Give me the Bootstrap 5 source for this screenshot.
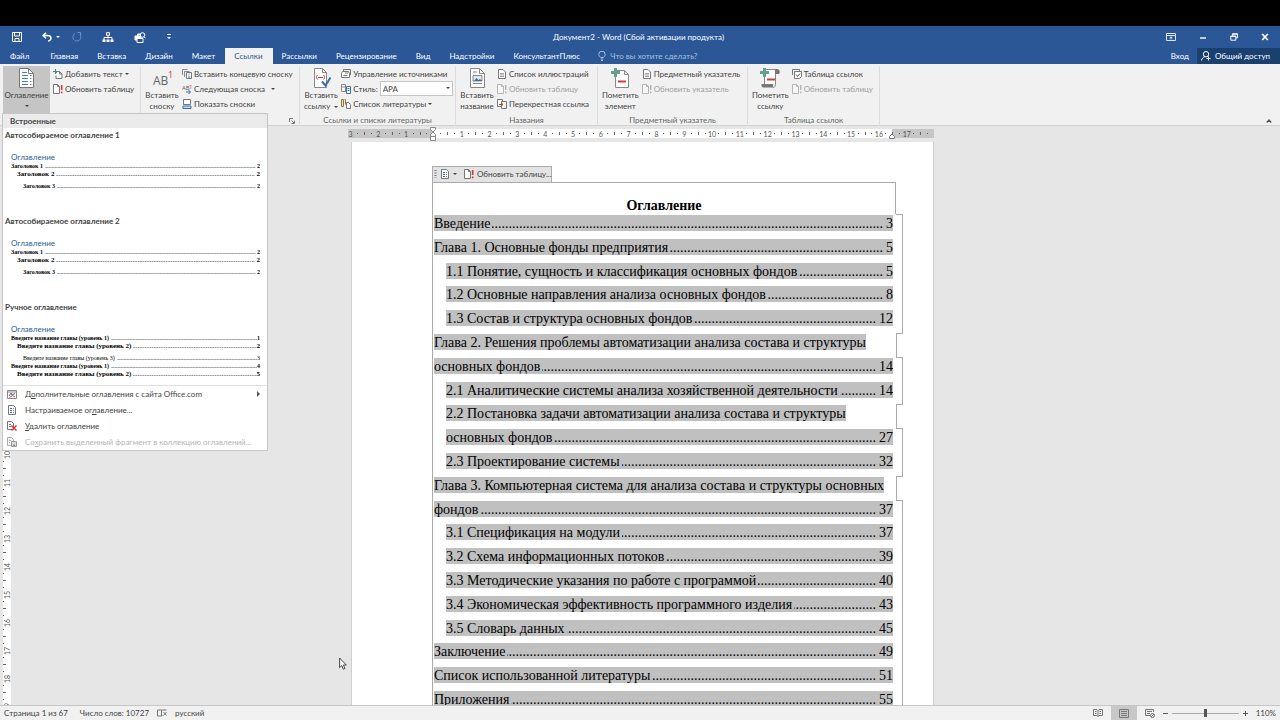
<!DOCTYPE html>
<html lang="ru">
<head>
<meta charset="utf-8">
<meta name="viewport" content="width=device-width, initial-scale=1">
<title>Документ2 - Word</title>
<link href="https://cdn.jsdelivr.net/npm/bootstrap@5.3.0/dist/css/bootstrap.min.css" rel="stylesheet">
<style>
  :root { --word-blue: #2b5797; --word-dark: #19406f; --chrome: #f1f1f1; --desk: #e6e6e6; --ink: #444; --mark: #c0c0c0; --frame: #ababab; --ui: Lato, Roboto, "Open Sans", sans-serif; }
  body { font-family: var(--ui); font-size: 8px; line-height: 12px; color: var(--ink); background: var(--desk); }
  button { font: inherit; color: inherit; background: none; border: 0; padding: 0; }
  svg { display: block; flex: none; fill: none; stroke-width: 1; }
  .letterbox { height: 26px; }
  .titlebar { background: var(--word-blue); height: 22px; }
  .tabstrip { background: var(--word-blue); height: 16px; padding-left: 1px; }
  .tabstrip .nav-link { color: #fff; padding: 0 10px 0 9px; line-height: 16px; border: 0; border-radius: 0; }
  .tabstrip .nav-link.active { background: var(--chrome); color: var(--word-blue); }
  .tellme { color: #a9bfdf; }
  .share { background: var(--word-dark); height: 16px; width: 83px; }
  .winbtns { gap: 23px; padding-right: 11px; }

  .ribbon { display: grid; grid-template-columns: 138px 159px 156px 142px 150px 132px 1fr; background: var(--chrome); border-bottom: 1px solid #d2d2d2; height: 62px; padding: 2px 0 0 3px; }
  .rgroup { border-right: 1px solid #dcdcdc; margin-bottom: 1px; }
  .rgroup-body { height: 48px; display: flex; align-items: flex-start; gap: 3px; }
  .rgroup-name { line-height: 12px; color: #666; }
  .bigbtn { line-height: 11px; display: flex; flex-direction: column; align-items: center; white-space: nowrap; min-width: 34px; }
  .bigbtn .pic { height: 24px; display: flex; align-items: center; }
  .bigbtn.pressed { background: #c5c5c5; width: 47px; height: 47px; }
  .rowbtn { height: 15px; display: flex; align-items: center; white-space: nowrap; gap: 2px; }
  .rowbtn:disabled { color: #a0a0a0; }
  .caret { width: 0; height: 0; border: 2px solid transparent; border-top-color: currentColor; border-bottom: 0; }
  .style-select { width: 73px; height: 15px; border: 1px solid #c6c6c6; border-radius: 0; background: #fff; color: var(--ink); font-size: 8px; padding: 0 2px; appearance: none; }
  .style-box { position: relative; }
  .style-box .caret { position: absolute; right: 3px; top: 6px; }

  .toc-menu { top: 100%; left: -1px; width: 266px; padding: 0; border: 1px solid #c6c6c6; border-radius: 0; font-size: 8px; color: var(--ink); background: #fff; }
  .toc-menu-head { background: #ebebeb; line-height: 14px; padding-left: 7px; font-weight: 700; }
  .gallery-item { display: flex; flex-direction: column; width: 100%; height: 86px; text-align: left; padding: 0 7px 0 8px; color: #000; font-family: "Liberation Serif", serif; line-height: 8px; }
  .gallery-title { font: 700 8px/14px var(--ui); color: var(--ink); margin: 0 0 10px -6px; }
  .gallery-head { font: 8px/10px var(--ui); color: #2a5f92; }
  .pv { display: flex; font-size: 6px; font-weight: 700; white-space: nowrap; }
  .pv-2 { font-size: 7px; padding-left: 6px; }
  .pv-3 { padding-left: 12px; margin-top: 4px; }
  .pv-plain { font-weight: 400; }
  .leader { flex: 1 1 0; min-width: 0; margin-left: 2px; overflow: hidden; display: flex; justify-content: flex-end; white-space: nowrap; }
  .leader::before { content: "........................................................................................................................................................................................................"; font-weight: 400; }
  .toc-cmds { border-top: 1px solid #e1e1e1; margin-top: -1px; }
  .toc-cmds .dropdown-item { height: 16px; padding: 0 7px 0 4px; gap: 8px; display: flex; align-items: center; color: inherit; line-height: 16px; }
  .toc-cmds .dropdown-item:disabled { color: #b4b4b4; }
  .arrow-r { border: 3px solid transparent; border-left-color: #555; border-right: 0; }

  .vruler { width: 8px; background: #fff; margin-left: 3px; margin-top: 17px; overflow: hidden; flex: none; }
  .vruler span { height: 7px; display: flex; align-items: center; justify-content: center; writing-mode: vertical-rl; transform: rotate(180deg); }
  .ticks { font-size: 7px; line-height: 8px; color: #555; }
  .hruler { width: 586px; height: 9px; margin: 3px 0 4px -3px; background: linear-gradient(to right, #c6c6c6 85px, #fff 85px, #fff 544px, #c6c6c6 544px); position: relative; padding-right: 3px; }
  .hruler .cells { display: flex; height: 9px; align-items: center; margin-left: -1px; }
  .hruler .cells span { flex: 1 1 0; width: 0; display: flex; justify-content: center; white-space: nowrap; }
  .dot::before { content: ""; width: 1px; height: 1px; background: #555; }
  .bar::before { content: ""; width: 1px; height: 3px; background: #666; }
  .vruler .bar::before { width: 3px; height: 1px; }
  .indent-l { position: absolute; left: 81px; top: -2px; }
  .indent-r { position: absolute; left: 540px; top: 4px; }

  .desk { padding-right: 6px; overflow: hidden; }
  .paper-col { width: 583px; }
  .paper { background: #fff; border: 1px solid #d0d0d0; border-width: 0 1px; padding: 24px 30px 0 80px; color: #000; font-family: "Liberation Serif", serif; font-size: 14px; }
  .cc-tab { font-family: var(--ui); font-size: 8px; height: 16px; width: 120px; background: #e3e3e3; border: 1px solid var(--frame); border-bottom: 0; color: var(--ink); padding-bottom: 2px; gap: 3px; }
  .cc-tab button { display: flex; align-items: center; gap: 3px; white-space: nowrap; }
  .cc { border-left: 1px solid var(--frame); }
  .cc-head { height: 32px; margin-right: 7px; border: 1px solid var(--frame); border-width: 1px 1px 0 0; font-size: 14px; line-height: 46px; margin-bottom: 0; font-weight: 700; text-align: center; }
  .toc-row { display: flex; height: 1.7em; line-height: 18px; padding-left: 1px; white-space: nowrap; color: #000; text-decoration: none; }
  .toc-row.sub { padding-left: 13px; }
  .toc-fill { background: var(--mark); height: 16px; margin-top: 1px; }
  .toc-fill.long { display: flex; flex: 1 1 0; min-width: 0; }
  .toc-row .notch { width: 10px; margin-left: auto; flex: none; display: flex; padding-left: 3px; }
  .notch::before { content: ""; flex: 1; border-right: 1px solid var(--frame); }
  .wrap-row .notch::before { border: 1px solid var(--frame); border-right: 0; margin-bottom: -1px; }
  .first-row .notch::before { border-top: 1px solid var(--frame); }
  .pg { padding-left: 3px; }

  .statusbar { background: var(--chrome); border-top: 1px solid #c6c6c6; height: 15px; }
  .view-on { background: #c8c8c8; width: 26px; height: 14px; display: flex; align-items: center; justify-content: center; }
  .zoomer { appearance: none; width: 67px; height: 8px; margin: 0; background: linear-gradient(#aaa, #aaa) center / 100% 1px no-repeat; }
  .zoomer::-webkit-slider-thumb { appearance: none; width: 3px; height: 8px; background: #555; }
  .pointer { position: absolute; left: 339px; top: 657px; z-index: 1100; }
</style>
</head>
<body class="vh-100 d-flex flex-column overflow-hidden position-relative">

<svg width="0" height="0" class="position-absolute" aria-hidden="true">
  <symbol id="i-update" viewBox="0 0 10 10"><path d="M.5.5h4l2 2v7h-6z" fill="#fff" stroke="#777"/><path d="M4.5.5v2h2" stroke="#777"/><path d="M8.7 1v5M8.7 7.5v1.8" stroke="#d33a35" stroke-width="1.6"/></symbol>
  <symbol id="i-update-off" viewBox="0 0 10 10"><path d="M.5.5h4l2 2v7h-6z" fill="#f6f6f6" stroke="#b5b5b5"/><path d="M4.5.5v2h2" stroke="#b5b5b5"/><path d="M8.7 1v5M8.7 7.5v1.8" stroke="#b5b5b5" stroke-width="1.4"/></symbol>
  <symbol id="i-page" viewBox="0 0 10 10"><path d="M1.500.5h4.500l2.500 2.500v6.500h-7z" fill="#fff" stroke="#777"/><path d="M3 4.500h4M3 6h4M3 7.500h4" stroke="#888" stroke-width=".8"/></symbol>
  <symbol id="i-toc" viewBox="0 0 10 10"><path d="M1.500.5h5l2 2v7h-7z" fill="#fff" stroke="#777"/><path d="M3 3.500h2M3 5.500h2M3 7.500h2" stroke="#3b6ea5"/><path d="M6 3.500h1M6 5.500h1M6 7.500h1" stroke="#777"/></symbol>
</svg>

<div class="letterbox bg-black flex-shrink-0"></div>

<header class="flex-shrink-0">
  <div class="titlebar d-flex align-items-center text-white">
    <div class="col d-flex align-items-center ps-2">
      <button aria-label="Сохранить" class="ms-1"><svg width="10" height="10" viewBox="0 0 10 10" stroke="#fff"><path d="M.5.5h9v9h-9zM2.500.5v3.500h5v-3.500M3 9.500v-3h4v3"/></svg></button>
      <button aria-label="Отменить" class="ms-3 ps-1"><svg width="10" height="10" viewBox="0 0 10 10" stroke="#fff"><path d="M4 .8L1 3.500l3 2.700M1 3.500h4.500c4.500 0 4.500 5 .5 5.500" stroke-width="1.500"/></svg></button>
      <span class="caret ms-1"></span>
      <button aria-label="Повторить" class="ms-2 ps-1" disabled><svg width="10" height="10" viewBox="0 0 10 10" stroke="#6f8fc0"><path d="M8 2.500A4 4 0 1 1 3 1.500M5.500.5H8.500V3.500"/></svg></button>
      <button aria-label="Структура" class="ms-3 ps-1"><svg width="12" height="11" viewBox="0 0 12 11" stroke="#fff"><path d="M4.500.7h3v2.600h-3zM6 3.500v3M2 8V5.500h8V8"/><path d="M.5 7.500h3v2.500h-3zM4.500 7.500h3v2.500h-3zM8.500 7.500h3v2.500h-3z" fill="#fff" stroke="none"/></svg></button>
      <button aria-label="Печать" class="ms-3 ps-1"><svg width="12" height="11" viewBox="0 0 12 11" stroke="#fff"><path d="M3.500 4V2h4M1 4h6v4H1z" fill="#fff"/><path d="M3 6.500h6v4H3z" fill="#2b5797"/><circle cx="8.500" cy="3" r="2.300" fill="#2b5797"/><path d="M10 4.800l1.500 1.500"/></svg></button>
      <button aria-label="Настроить панель" class="ms-3 ps-1"><svg width="6" height="6" viewBox="0 0 6 6"><path d="M1 .5h4" stroke="#fff"/><path d="M1 3h4L3 5z" fill="#fff"/></svg></button>
    </div>
    <div>Документ2 - Word (Сбой активации продукта)</div>
    <div class="col d-flex align-items-center justify-content-end winbtns">
      <button aria-label="Параметры ленты"><svg width="10" height="8" viewBox="0 0 10 8" stroke="#dbe5f3"><path d="M.5.5h9v7h-9zM.5 2.500h9M5 6.500V4M3.500 5L5 3.800 6.500 5"/></svg></button>
      <button aria-label="Свернуть"><svg width="8" height="8" viewBox="0 0 8 8"><path d="M1 5h6" stroke="#fff" stroke-width="1.400"/></svg></button>
      <button aria-label="Восстановить"><svg width="8" height="8" viewBox="0 0 8 8" stroke="#fff"><path d="M2.500 2.500V.8h5v4H6M.8 3h5v4.200h-5zM.8 3.500h5M2.500 1.200h5"/></svg></button>
      <button aria-label="Закрыть"><svg width="8" height="8" viewBox="0 0 8 8" stroke="#fff"><path d="M1.200 1l5.600 6M6.800 1L1.200 7" stroke-width="1.700"/></svg></button>
    </div>
  </div>
  <nav class="tabstrip d-flex">
    <ul class="nav flex-nowrap text-nowrap">
      <li class="nav-item me-1"><a class="nav-link pe-2" href="#">Файл</a></li>
      <li class="nav-item"><a class="nav-link" href="#">Главная</a></li>
      <li class="nav-item"><a class="nav-link" href="#">Вставка</a></li>
      <li class="nav-item"><a class="nav-link" href="#">Дизайн</a></li>
      <li class="nav-item"><a class="nav-link" href="#">Макет</a></li>
      <li class="nav-item"><a class="nav-link active" href="#">Ссылки</a></li>
      <li class="nav-item"><a class="nav-link" href="#">Рассылки</a></li>
      <li class="nav-item"><a class="nav-link" href="#">Рецензирование</a></li>
      <li class="nav-item"><a class="nav-link" href="#">Вид</a></li>
      <li class="nav-item"><a class="nav-link" href="#">Надстройки</a></li>
      <li class="nav-item"><a class="nav-link" href="#">КонсультантПлюс</a></li>
    </ul>
    <button class="tellme d-flex align-items-center ps-2 gap-1"><svg width="8" height="10" viewBox="0 0 8 10" stroke="#a9bfdf"><path d="M2.700 6.500C1 5 .8 3.800.8 3.400a3.200 3.200 0 0 1 6.400 0c0 .4-.2 1.600-1.900 3.100zM2.700 8h2.600M3 9.500h2"/></svg>Что вы хотите сделать?</button>
    <div class="ms-auto d-flex text-white align-items-center">
      <button class="me-2">Вход</button>
      <button class="share d-flex align-items-center gap-1 ps-1"><svg width="10" height="10" viewBox="0 0 10 10" stroke="#fff"><circle cx="5" cy="3.200" r="2.700"/><path d="M.6 9.500c.2-2 1.400-3.300 3-3.700M7.500 5.500v4M5.500 7.500h4"/></svg>Общий доступ</button>
    </div>
  </nav>

  <div class="ribbon">
    <section class="rgroup">
      <div class="rgroup-body">
        <div class="dropdown">
          <button class="bigbtn pressed" aria-expanded="true"><span class="pic"><svg width="15" height="20" viewBox="0 0 15 20"><path d="M.5.5h9l5 5v14H.5z" fill="#fff" stroke="#777"/><path d="M9.500.5v5h5" stroke="#777"/><path d="M3 4.500h5M3 7.500h6M3 10.500h6M3 13.500h6M3 16.500h6" stroke="#4a7ebb"/><path d="M11 7.500h1.500M11 10.500h1.500M11 13.500h1.500M11 16.500h1.500" stroke="#777"/></svg></span>Оглавление<span class="caret mt-1"></span></button>
          <div class="dropdown-menu toc-menu show">
            <div class="toc-menu-head">Встроенные</div>
            <button class="gallery-item"><span class="gallery-title">Автособираемое оглавление 1</span><span class="gallery-head">Оглавление</span>
              <span class="pv">Заголовок 1<span class="leader"></span>&nbsp;2</span><span class="pv pv-2">Заголовок 2<span class="leader"></span>&nbsp;2</span><span class="pv pv-3">Заголовок 3<span class="leader"></span>&nbsp;2</span></button>
            <button class="gallery-item"><span class="gallery-title">Автособираемое оглавление 2</span><span class="gallery-head">Оглавление</span>
              <span class="pv">Заголовок 1<span class="leader"></span>&nbsp;2</span><span class="pv pv-2">Заголовок 2<span class="leader"></span>&nbsp;2</span><span class="pv pv-3">Заголовок 3<span class="leader"></span>&nbsp;2</span></button>
            <button class="gallery-item"><span class="gallery-title">Ручное оглавление</span><span class="gallery-head">Оглавление</span>
              <span class="pv">Введите название главы (уровень 1)<span class="leader"></span>1</span><span class="pv pv-2">Введите название главы (уровень 2)<span class="leader"></span>2</span><span class="pv pv-3 pv-plain">Введите название главы (уровень 3)<span class="leader"></span>3</span><span class="pv">Введите название главы (уровень 1)<span class="leader"></span>4</span><span class="pv pv-2">Введите название главы (уровень 2)<span class="leader"></span>5</span></button>
            <div class="toc-cmds">
              <button class="dropdown-item"><svg width="10" height="10" viewBox="0 0 10 10"><path d="M.5 1.500h9v8h-9z" fill="#fff" stroke="#888"/><path d="M.5 3h9" stroke="#888"/><path d="M2 7l2-3 1 2 3-1.500" stroke="#3b6ea5"/><path d="M2.500 8.500l3-2 2.500 1.500" stroke="#d33a35"/></svg><span>Д<u>о</u>полнительные оглавления с сайта Office.com</span><span class="arrow-r ms-auto"></span></button>
              <button class="dropdown-item"><svg width="10" height="10"><use href="#i-toc"/></svg><span>Настраиваемое ог<u>л</u>авление...</span></button>
              <button class="dropdown-item"><svg width="10" height="10" viewBox="0 0 10 10"><path d="M.5.5h4l2 2v6h-6z" fill="#fff" stroke="#777"/><path d="M2 3.500h2M2 5.500h2" stroke="#777"/><path d="M4.500 4.500l5 5M9.500 4.500l-5 5" stroke="#d33a35" stroke-width="1.500"/></svg><span><u>У</u>далить оглавление</span></button>
              <button class="dropdown-item" disabled><svg width="10" height="10" viewBox="0 0 10 10"><path d="M.5.5h4l2 2v6h-6z" fill="#f6f6f6" stroke="#aaa"/><path d="M2 3.500h2M2 5.500h1" stroke="#aaa"/><path d="M4.500 4.500h5v5h-5z" fill="#ddd" stroke="#999"/><path d="M6 7.500h2v2H6z" fill="#888"/></svg><span>Со<u>х</u>ранить выделенный фрагмент в коллекцию оглавлений...</span></button>
            </div>
          </div>
        </div>
        <div>
          <button class="rowbtn"><svg width="10" height="10" viewBox="0 0 10 10"><path d="M3.500 4V2.500h3l2.500 2.500v4.500h-6v-3M6.500 2.500V5H9" fill="#fff" stroke="#777"/><path d="M2.500 0v5M0 2.500h5" stroke="#4a9078"/></svg>Добавить текст<span class="caret"></span></button>
          <button class="rowbtn"><svg width="10" height="10"><use href="#i-update"/></svg>Обновить таблицу</button>
        </div>
      </div>
    </section>

    <section class="rgroup">
      <div class="rgroup-body ps-1">
        <button class="bigbtn"><span class="pic"><svg width="22" height="20" viewBox="0 0 22 20" font-family="Open Sans, sans-serif"><text x="2" y="17" font-size="12" fill="#666">AB</text><text x="17" y="10" font-size="9" fill="#d33a35">1</text></svg></span>Вставить<span>сноску</span></button>
        <div>
          <button class="rowbtn"><svg width="10" height="10" viewBox="0 0 10 10"><path d="M.5 6V.5h5M2.500 8V2.500h5" stroke="#888"/><path d="M4.500 3.500h5v6h-5z" fill="#fff" stroke="#777"/><path d="M7 4.500v1M7 6.500V9" stroke="#3b6ea5"/></svg>Вставить концевую сноску</button>
          <button class="rowbtn"><svg width="10" height="10" viewBox="0 0 10 10" font-family="Open Sans, sans-serif"><text x="0" y="6" font-size="6" fill="#555">AB</text><text x="7" y="5" font-size="6" fill="#d33a35">1</text><path d="M4 8h4M6.500 6l2 2-2 2" stroke="#3b6ea5"/></svg>Следующая сноска<span class="caret ms-1"></span></button>
          <button class="rowbtn"><svg width="10" height="10" viewBox="0 0 10 10"><path d="M1.500.5h7v5h-7z" fill="#fff" stroke="#777"/><path d="M1 7h8v2.500H1z" fill="#c9dcf0" stroke="#3b6ea5"/></svg>Показать сноски</button>
        </div>
      </div>
      <div class="d-flex justify-content-end"><button aria-label="Параметры сносок" class="mt-1 me-1"><svg width="6" height="6" viewBox="0 0 6 6" stroke="#777"><path d="M.5 4V.5H4M2.500 2.500l2.500 2.500M5.500 2.500v3h-3"/></svg></button></div>
    </section>

    <section class="rgroup">
      <div class="rgroup-body ps-1">
        <button class="bigbtn"><span class="pic"><svg width="19" height="20" viewBox="0 0 19 20"><path d="M2.500.5h8l4 4v15h-12z" fill="#fff" stroke="#888"/><path d="M10.500.5v4h4" stroke="#888"/><path d="M5.500 7C4 9 4 9.500 5.500 11.500M6 9.500h5M11.500 7c1.500 2 1.500 2.500 0 4.500" stroke="#d33a35"/><path d="M10 13.500l3.500 4 5-8" stroke="#3b6ea5" stroke-width="2"/></svg></span>Вставить<span class="d-flex align-items-center gap-1">ссылку<span class="caret"></span></span></button>
        <div>
          <button class="rowbtn"><svg width="10" height="10" viewBox="0 0 10 10"><path d="M2.500 3V.5h7V6" stroke="#777"/><path d="M.5 4.500l1-2h6l1 2v4h-8z" fill="#fff" stroke="#777"/><path d="M2.500 6.500h4M4 4h3" stroke="#777"/></svg>Управление источниками</button>
          <div class="rowbtn"><svg width="10" height="10" viewBox="0 0 10 10"><path d="M.5.5h4v7h-4zM.5 3h4" fill="#fff" stroke="#888"/><path d="M5.500 2.500h4v7h-4z" fill="#fff" stroke="#3b6ea5"/><path d="M6.500 4.500h2M6.500 6.500h2" stroke="#3b6ea5"/></svg><label for="bibStyle">Стиль:</label><span class="style-box"><select id="bibStyle" class="style-select d-block"><option>APA</option></select><span class="caret"></span></span></div>
          <button class="rowbtn"><svg width="10" height="10" viewBox="0 0 10 10"><path d="M.5.5h2v7h-2zM3.500.5h1v5" fill="#f2dfa8" stroke="#8a7a40"/><path d="M5.500 3.500h2l2 2v4h-4z" fill="#fff" stroke="#777"/></svg>Список литературы<span class="caret"></span></button>
        </div>
      </div>
      <div class="rgroup-name text-center">Ссылки и списки литературы</div>
    </section>

    <section class="rgroup">
      <div class="rgroup-body ps-1">
        <button class="bigbtn"><span class="pic"><svg width="15" height="20" viewBox="0 0 15 20"><path d="M.5.5h9l5 5v14H.5z" fill="#fff" stroke="#888"/><path d="M9.500.5v5h5" stroke="#888"/><path d="M3 4h4M3 15.500h9" stroke="#888"/><path d="M3 7.500h9v5.500H3z" fill="#dceaf6" stroke="#888"/><path d="M4 13l2.500-3 2 2 1.500-1 2 2z" fill="#3b6ea5"/></svg></span>Вставить<span>название</span></button>
        <div>
          <button class="rowbtn"><svg width="10" height="10"><use href="#i-page"/></svg>Список иллюстраций</button>
          <button class="rowbtn" disabled><svg width="10" height="10"><use href="#i-update-off"/></svg>Обновить таблицу</button>
          <button class="rowbtn"><svg width="10" height="10" viewBox="0 0 10 10"><path d="M.5.5h5v7h-5z" fill="#fff" stroke="#777"/><path d="M4.500 2.500h5v7h-5z" fill="#fff" stroke="#777"/><path d="M2 5.500h4M5 4v3" stroke="#d33a35"/></svg>Перекрестная ссылка</button>
        </div>
      </div>
      <div class="rgroup-name text-center">Названия</div>
    </section>

    <section class="rgroup">
      <div class="rgroup-body ps-1">
        <button class="bigbtn"><span class="pic"><svg width="19" height="21" viewBox="0 0 19 21"><path d="M4.500 2.500h9l4 4v13h-13z" fill="#fff" stroke="#888"/><path d="M13.500 2.500v4h4" stroke="#888"/><path d="M4.500 0v9M0 4.500h9" stroke="#5fa189" stroke-width="3"/><path d="M7 13.500h8" stroke="#c8403a" stroke-width="2"/></svg></span>Пометить<span>элемент</span></button>
        <div>
          <button class="rowbtn"><svg width="10" height="10"><use href="#i-page"/></svg>Предметный указатель</button>
          <button class="rowbtn" disabled><svg width="10" height="10"><use href="#i-update-off"/></svg>Обновить указатель</button>
        </div>
      </div>
      <div class="rgroup-name text-center">Предметный указатель</div>
    </section>

    <section class="rgroup">
      <div class="rgroup-body ps-1">
        <button class="bigbtn"><span class="pic"><svg width="20" height="21" viewBox="0 0 20 21"><path d="M4.500 16V1.500h11V16" fill="#fff" stroke="#888"/><path d="M15.500 1.500h2c1.500 0 2 1.500 1.500 4h-3.500z" fill="#777" stroke="#777"/><path d="M1.500 16h11.500v3.500H3C1.500 19.500 1.500 17 1.500 16z" fill="#777"/><path d="M13 19.500c2 0 2.500-1.500 2.500-4" stroke="#888"/><path d="M4.500 0v9M0 4.500h9" stroke="#5fa189" stroke-width="3"/><path d="M7 11.500h8" stroke="#c8403a" stroke-width="2"/></svg></span>Пометить<span>ссылку</span></button>
        <div>
          <button class="rowbtn"><svg width="10" height="10" viewBox="0 0 10 10"><path d="M.5 6V.5h7v1.500" stroke="#777"/><path d="M2.500 2.500h7v5l-2 2h-5z" fill="#fff" stroke="#777"/><path d="M4 5.500l1.500 2 2.500-3" stroke="#555"/></svg>Таблица ссылок</button>
          <button class="rowbtn" disabled><svg width="10" height="10"><use href="#i-update-off"/></svg>Обновить таблицу</button>
        </div>
      </div>
      <div class="rgroup-name text-center">Таблица ссылок</div>
    </section>

    <div class="d-flex align-items-end justify-content-end pb-1 pe-1"><button aria-label="Свернуть ленту" class="me-1"><svg width="6" height="4" viewBox="0 0 6 4" stroke="#555"><path d="M.7 3.500L3 1l2.300 2.500" stroke-width="1.300"/></svg></button></div>
  </div>
</header>

<main class="d-flex flex-fill overflow-hidden">
  <div class="vruler ticks" id="vruler"></div>
  <div class="desk flex-fill d-flex justify-content-center">
    <div class="paper-col">
      <div class="hruler ticks">
        <div class="cells" id="hruler"></div>
        <svg class="indent-l" width="8" height="15" viewBox="0 0 8 15" stroke="#888"><path d="M1.500.5h5v2L4 5 1.500 2.500zM1.500 9.500v-2L4 5l2.500 2.500v2zM1.500 9.500h5v4h-5z" fill="#fff"/></svg>
        <svg class="indent-r" width="8" height="6" viewBox="0 0 8 6" stroke="#777"><path d="M1.500 5.500V3.500L4 1l2.500 2.500v2z" fill="#fff"/></svg>
      </div>
      <article class="paper">
        <div class="cc-tab d-flex align-items-center">
          <svg width="4" height="10" viewBox="0 0 4 10" stroke="#777" stroke-dasharray="1 1.500"><path d="M2.500 1v8" stroke-width="2"/></svg>
          <button aria-label="Оглавление"><svg width="10" height="10"><use href="#i-toc"/></svg><span class="caret"></span></button>
          <button class="ms-1"><svg width="10" height="10"><use href="#i-update"/></svg>Обновить таблицу...</button>
        </div>
        <div class="cc">
          <h1 class="cc-head">Оглавление</h1>
          <a class="toc-row first-row" href="#"><span class="toc-fill long">Введение<span class="leader"></span><span class="pg">3</span></span><span class="notch"></span></a>
          <a class="toc-row" href="#"><span class="toc-fill long">Глава 1. Основные фонды предприятия<span class="leader"></span><span class="pg">5</span></span><span class="notch"></span></a>
          <a class="toc-row sub" href="#"><span class="toc-fill long">1.1 Понятие, сущность и классификация основных фондов<span class="leader"></span><span class="pg">5</span></span><span class="notch"></span></a>
          <a class="toc-row sub" href="#"><span class="toc-fill long">1.2 Основные направления анализа основных фондов<span class="leader"></span><span class="pg">8</span></span><span class="notch"></span></a>
          <a class="toc-row sub" href="#"><span class="toc-fill long">1.3 Состав и структура основных фондов<span class="leader"></span><span class="pg">12</span></span><span class="notch"></span></a>
          <a class="toc-row wrap-row" href="#"><span class="toc-fill">Глава 2. Решения проблемы автоматизации анализа состава и структуры</span><span class="notch"></span></a>
          <a class="toc-row" href="#"><span class="toc-fill long">основных фондов<span class="leader"></span><span class="pg">14</span></span><span class="notch"></span></a>
          <a class="toc-row sub" href="#"><span class="toc-fill long">2.1 Аналитические системы анализа хозяйственной деятельности<span class="leader"></span><span class="pg">14</span></span><span class="notch"></span></a>
          <a class="toc-row sub wrap-row" href="#"><span class="toc-fill">2.2 Постановка задачи автоматизации анализа состава и структуры</span><span class="notch"></span></a>
          <a class="toc-row sub" href="#"><span class="toc-fill long">основных фондов<span class="leader"></span><span class="pg">27</span></span><span class="notch"></span></a>
          <a class="toc-row sub" href="#"><span class="toc-fill long">2.3 Проектирование системы<span class="leader"></span><span class="pg">32</span></span><span class="notch"></span></a>
          <a class="toc-row wrap-row" href="#"><span class="toc-fill">Глава 3. Компьютерная система для анализа состава и структуры основных</span><span class="notch"></span></a>
          <a class="toc-row" href="#"><span class="toc-fill long">фондов<span class="leader"></span><span class="pg">37</span></span><span class="notch"></span></a>
          <a class="toc-row sub" href="#"><span class="toc-fill long">3.1 Спецификация на модули<span class="leader"></span><span class="pg">37</span></span><span class="notch"></span></a>
          <a class="toc-row sub" href="#"><span class="toc-fill long">3.2 Схема информационных потоков<span class="leader"></span><span class="pg">39</span></span><span class="notch"></span></a>
          <a class="toc-row sub" href="#"><span class="toc-fill long">3.3 Методические указания по работе с программой<span class="leader"></span><span class="pg">40</span></span><span class="notch"></span></a>
          <a class="toc-row sub" href="#"><span class="toc-fill long">3.4 Экономическая эффективность программного изделия<span class="leader"></span><span class="pg">43</span></span><span class="notch"></span></a>
          <a class="toc-row sub" href="#"><span class="toc-fill long">3.5 Словарь данных<span class="leader"></span><span class="pg">45</span></span><span class="notch"></span></a>
          <a class="toc-row" href="#"><span class="toc-fill long">Заключение<span class="leader"></span><span class="pg">49</span></span><span class="notch"></span></a>
          <a class="toc-row" href="#"><span class="toc-fill long">Список использованной литературы<span class="leader"></span><span class="pg">51</span></span><span class="notch"></span></a>
          <a class="toc-row" href="#"><span class="toc-fill long">Приложения<span class="leader"></span><span class="pg">55</span></span><span class="notch"></span></a>
        </div>
      </article>
    </div>
  </div>
</main>

<footer class="statusbar d-flex align-items-center flex-shrink-0 text-nowrap px-1">
  <span>Страница 1 из 67</span>
  <span class="ms-2 ps-1">Число слов: 10727</span>
  <button aria-label="Правописание" class="ms-2"><svg width="10" height="8" viewBox="0 0 10 8" stroke="#777"><path d="M.5 1h4v6h-4zM4.500 7l1-.5M5 1h4.500M6.500 3l3 3.500M9.500 3l-3 3.500"/></svg></button>
  <button class="ms-2">русский</button>
  <div class="ms-auto d-flex align-items-center">
    <button aria-label="Режим чтения" class="me-2"><svg width="10" height="8" viewBox="0 0 10 8" stroke="#777"><path d="M.5.5h3.500L5 1.500 6 .5h3.500v6H6l-1 1-1-1H.5zM5 1.500v6M2 2.500h1.500M2 4.500h1.500M6.500 2.500H8M6.500 4.500H8"/></svg></button>
    <button aria-label="Разметка страницы" class="view-on"><svg width="10" height="9" viewBox="0 0 10 9" stroke="#777"><path d="M.5.5h9v8h-9zM2 2.500h6M2 4.500h6M2 6.500h6"/></svg></button>
    <button aria-label="Веб-документ" class="ms-2"><svg width="10" height="9" viewBox="0 0 10 9" stroke="#777"><path d="M6 6.500H.5V.5h8V3M2 2.500h5M2 4.500h3"/><circle cx="7.500" cy="6.500" r="2"/><path d="M6 8l3-3"/></svg></button>
    <button aria-label="Уменьшить" class="ms-2 me-1"><svg width="5" height="5" viewBox="0 0 5 5" stroke="#555"><path d="M0 2.500h5"/></svg></button>
    <input type="range" class="zoomer" min="10" max="200" value="107" aria-label="Масштаб">
    <button aria-label="Увеличить" class="ms-1"><svg width="5" height="5" viewBox="0 0 5 5" stroke="#555"><path d="M0 2.500h5M2.500 0v5"/></svg></button>
    <span class="ms-2">110%</span>
  </div>
</footer>

<svg class="pointer" width="8" height="13" viewBox="0 0 8 13"><path d="M.6 1v9.600l2.200-2 1.500 3.600 1.600-.7-1.500-3.500h2.900z" fill="#fff" stroke="#333" stroke-width=".9"/></svg>

<script src="https://cdn.jsdelivr.net/npm/bootstrap@5.3.0/dist/js/bootstrap.bundle.min.js"></script>
<script>
  // Rulers: one cell per quarter of a centimetre; numbers on whole centimetres, bars on halves.
  function fillRuler(id, count, zeroAt) {
    const host = document.getElementById(id);
    for (let i = 0; i < count; i++) {
      const q = i - zeroAt, cell = document.createElement('span');
      if (q % 4 === 0) cell.textContent = q ? Math.abs(q / 4) : '';
      else cell.className = q % 2 ? 'dot' : 'bar';
      host.append(cell);
    }
  }
  fillRuler('hruler', 84, 12);
  fillRuler('vruler', 82, 4);
</script>
</body>
</html>
